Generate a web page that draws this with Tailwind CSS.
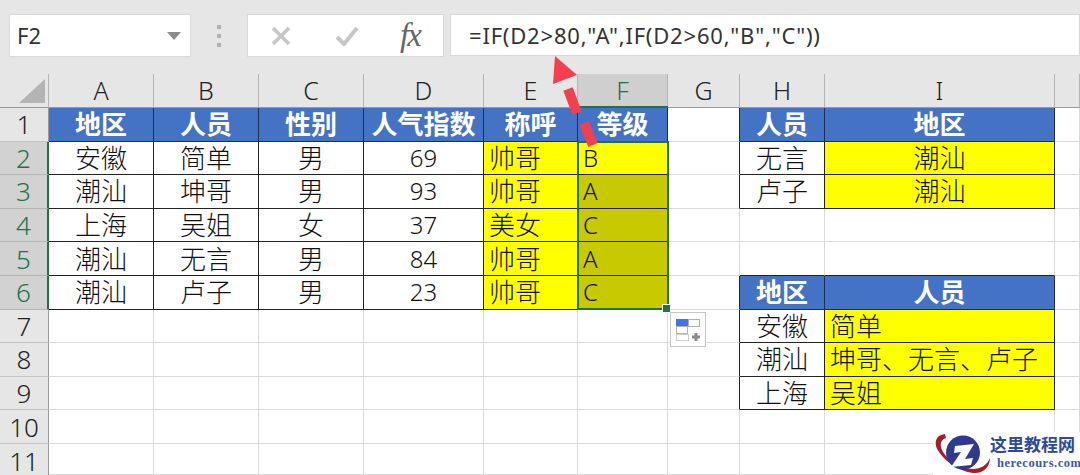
<!DOCTYPE html>
<html lang="en">
<head>
  <meta charset="UTF-8">
  <title>Excel IF</title>
  <script src="https://cdn.jsdelivr.net/npm/@tailwindcss/browser@4"></script>
</head>
<body class="bg-white">
  <div class="relative w-[1080px] h-[475px] overflow-hidden font-['Noto_Sans','Noto_Sans_CJK_SC',sans-serif] text-[#111]">

    <!-- formula bar -->
    <div class="h-[74px] bg-[#e6e6e6] flex items-start pt-[14px] pl-[9px]">
      <div class="w-[182px] h-[43px] bg-white border border-[#d8d8d8] flex items-center justify-between pl-[7px] pr-[9px] text-[22px] text-[#333]">
        <span>F2</span>
        <svg width="14" height="8" viewBox="0 0 14 8"><polygon points="0,0 14,0 7,8" fill="#8a8a8a"/></svg>
      </div>
      <div class="w-[56px] h-[43px] flex flex-col items-center justify-center gap-[5px]">
        <span class="w-[4px] h-[4px] bg-[#b0b0b0]"></span>
        <span class="w-[4px] h-[4px] bg-[#b0b0b0]"></span>
        <span class="w-[4px] h-[4px] bg-[#b0b0b0]"></span>
      </div>
      <div class="w-[197px] h-[43px] bg-white border border-[#d8d8d8] flex items-center pl-[23px]">
        <svg width="20" height="20" viewBox="0 0 20 20"><path d="M2 2 L18 18 M18 2 L2 18" stroke="#c6c6c6" stroke-width="3.5"/></svg>
        <svg class="ml-[44px]" width="24" height="20" viewBox="0 0 24 20"><path d="M2 11 L9 18 L22 2" fill="none" stroke="#c6c6c6" stroke-width="4"/></svg>
        <span class="ml-[41px] font-['Liberation_Serif',serif] italic text-[33px] leading-none text-[#666] tracking-[-2px]">fx</span>
      </div>
      <div class="ml-[6px] flex-1 h-[42px] bg-white border border-[#d8d8d8] flex items-center pl-[18px] text-[22px] tracking-[0.8px] text-[#333] whitespace-nowrap">=IF(D2&gt;80,"A",IF(D2&gt;60,"B","C"))</div>
    </div>

    <!-- sheet, filled from the rows below -->
    <div id="sheet" class="grid grid-cols-[49px_105px_105px_105px_120px_94px_90px_72px_85px_230px_25px] grid-rows-[34px_repeat(10,33.6px)_31px] text-[26px] leading-none"></div>

    <!-- corner triangle -->
    <svg class="absolute left-0 top-[74px]" width="48" height="33" viewBox="0 0 48 33"><polygon points="19,29 45,5 45,29" fill="#b4b4b4"/></svg>

    <!-- selection F2:F6 -->
    <div class="absolute left-[577px] top-[141px] w-[92px] h-[169px] border-2 border-[#217346]"></div>
    <div class="absolute left-[578px] top-[106px] w-[90px] h-[2px] bg-[#217346]"></div>
    <div class="absolute left-[662px] top-[304px] w-[9px] h-[9px] bg-[#217346] border border-white"></div>

    <!-- paste options -->
    <div class="absolute left-[670px] top-[312px] w-[36px] h-[35px] bg-white border border-[#c6c6c6]">
      <svg width="34" height="33" viewBox="0 0 34 33">
        <rect x="5" y="6" width="12" height="7" fill="#3f74f0"/>
        <rect x="17.5" y="6.5" width="11" height="7" fill="#fff" stroke="#b0b0b0"/>
        <rect x="5.5" y="13.5" width="11" height="7" fill="#fff" stroke="#c2b38c"/>
        <rect x="5.5" y="21.5" width="12" height="6" fill="#fff" stroke="#999" stroke-dasharray="1 1"/>
        <path d="M25 20 V28 M21 24 H29" stroke="#8a8a8a" stroke-width="3"/>
      </svg>
    </div>

    <!-- red arrow -->
    <svg class="absolute left-[540px] top-[50px]" width="70" height="105" viewBox="0 0 70 105">
      <polygon points="15,6 37,25 13,34" fill="#f4404e"/>
      <path d="M28 39 L37 63 M44 73 L53 95" stroke="#f4404e" stroke-width="10"/>
    </svg>

    <!-- watermark -->
    <div class="absolute left-[933px] top-[432px] w-[147px] h-[43px] flex items-start bg-white">
      <svg class="shrink-0" width="58" height="43" viewBox="0 0 58 43">
        <path d="M12 2 C2 3 0 12 6 20 C13 30 25 39 40 41 C50 42 57 35 57 26 C54 33 48 37 40 37 C27 36 13 27 9 18 C6 11 9 7 13 6 Z" fill="#a81c28"/>
        <circle cx="30" cy="20.5" r="17" fill="#2d3a90"/>
        <polygon points="22,14 41,12 32,27 40,26 38,33 18,35 28,20 21,21" fill="#fff"/>
      </svg>
      <div class="ml-[-1px] pt-[4px] flex flex-col items-start">
        <span class="text-[17px] leading-[18px] font-bold text-[#2d4a9a] whitespace-nowrap">这里教程网</span>
        <span class="mt-[2px] ml-[7px] font-['Liberation_Serif',serif] text-[12.5px] leading-[14px] font-bold tracking-[0.5px] text-[#3b5a9e]">herecours.com</span>
      </div>
    </div>
  </div>

  <script>
    const gridCell = 'border-r border-b border-[#d9d9d9]';
    const beforeTable = 'border-r border-r-[#222] border-b border-b-[#d9d9d9]';
    const headCell = 'border-r border-b border-[#1f2f50] bg-[#4472c4] text-white font-bold justify-center';
    const bodyCell = 'border-r border-b border-[#222] justify-center font-light';
    const yellowCell = 'border-r border-b border-[#222] bg-[#ffff00] justify-center font-light';
    const yellowLeft = 'border-r border-b border-[#222] bg-[#ffff00] pl-[5px] font-light';
    const selFirst = 'border-r border-b border-[#222] bg-[#ffff00] pl-[5px] text-[24px] font-light';
    const selRest = 'border-r border-b border-[#222] bg-[#c9c900] pl-[5px] text-[24px] font-light';
    const numCell = 'border-r border-b border-[#222] justify-center text-[24px] font-light';
    const colHead = 'border-r border-b border-r-[#b4b4b4] border-b-[#9a9a9a] bg-[#e6e6e6] text-[#222] justify-center text-[25px] font-light';
    const rowHead = 'border-r border-b border-r-[#9a9a9a] border-b-[#c4c4c4] bg-[#e6e6e6] text-[#222] justify-center font-light';
    const rowHeadOn = 'border-r-2 border-b border-r-[#217346] border-b-[#b4b4b4] bg-[#d2d2d2] text-[#217346] justify-center font-light';
    const rowHeadEnd = 'border-r border-r-[#9a9a9a] bg-[#e6e6e6] text-[#222] justify-center font-light pt-[4px]';

    const empty = ['', gridCell];
    const gap = ['', beforeTable];

    const rows = [
      [['', colHead], ['A', colHead], ['B', colHead], ['C', colHead], ['D', colHead], ['E', colHead],
       ['F', 'border-r border-b border-[#b4b4b4] bg-[#cfcfcf] text-[#217346] justify-center text-[25px] font-light'],
       ['G', colHead], ['H', colHead], ['I', colHead], ['', colHead]],
      [['1', rowHead], ['地区', headCell], ['人员', headCell], ['性别', headCell], ['人气指数', headCell], ['称呼', headCell], ['等级', headCell], gap, ['人员', headCell], ['地区', headCell], empty],
      [['2', rowHeadOn], ['安徽', bodyCell], ['简单', bodyCell], ['男', bodyCell], ['69', numCell], ['帅哥', yellowLeft], ['B', selFirst], gap, ['无言', bodyCell], ['潮汕', yellowCell], empty],
      [['3', rowHeadOn], ['潮汕', bodyCell], ['坤哥', bodyCell], ['男', bodyCell], ['93', numCell], ['帅哥', yellowLeft], ['A', selRest], gap, ['卢子', bodyCell], ['潮汕', yellowCell], empty],
      [['4', rowHeadOn], ['上海', bodyCell], ['吴姐', bodyCell], ['女', bodyCell], ['37', numCell], ['美女', yellowLeft], ['C', selRest], empty, empty, empty, empty],
      [['5', rowHeadOn], ['潮汕', bodyCell], ['无言', bodyCell], ['男', bodyCell], ['84', numCell], ['帅哥', yellowLeft], ['A', selRest], empty,
       ['', 'border-r border-b border-r-[#d9d9d9] border-b-[#222]'], ['', 'border-r border-b border-r-[#d9d9d9] border-b-[#222]'], empty],
      [['6', rowHeadOn], ['潮汕', bodyCell], ['卢子', bodyCell], ['男', bodyCell], ['23', numCell], ['帅哥', yellowLeft], ['C', selRest], gap, ['地区', headCell], ['人员', headCell], empty],
      [['7', rowHead], empty, empty, empty, empty, empty, empty, gap, ['安徽', bodyCell], ['简单', yellowLeft], empty],
      [['8', rowHead], empty, empty, empty, empty, empty, empty, gap, ['潮汕', bodyCell], ['坤哥、无言、卢子', yellowLeft], empty],
      [['9', rowHead], empty, empty, empty, empty, empty, empty, gap, ['上海', bodyCell], ['吴姐', yellowLeft], empty],
      [['10', rowHead], empty, empty, empty, empty, empty, empty, empty, empty, empty, empty],
      [['11', rowHeadEnd], empty, empty, empty, empty, empty, empty, empty, empty, empty, empty],
    ];

    const sheet = document.getElementById('sheet');
    rows.forEach(row => {
      row.forEach(([text, cls]) => {
        const div = document.createElement('div');
        div.className = 'flex items-center whitespace-nowrap ' + cls;
        div.textContent = text;
        sheet.appendChild(div);
      });
    });
  </script>
</body>
</html>
